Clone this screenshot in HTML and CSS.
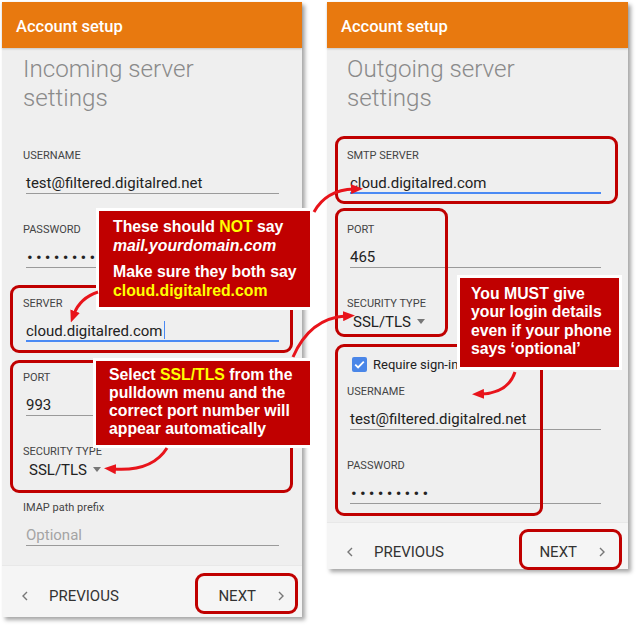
FILE: index.html
```html
<!DOCTYPE html>
<html lang="en">
<head>
<meta charset="utf-8">
<title>Account setup</title>
<link rel="stylesheet" href="styles.css">
</head>
<body>
<div class="page">
  <section class="phone phone-left">
    <header class="appbar">Account setup</header>
    <div class="content">
      <h1 class="title">Incoming server<br>settings</h1>
      <div class="field field-first">
        <div class="label">USERNAME</div>
        <div class="value">test@filtered.digitalred.net</div>
      </div>
      <div class="field">
        <div class="label">PASSWORD</div>
        <div class="value dots">•••••••••</div>
      </div>
      <div class="field">
        <div class="label">SERVER</div>
        <div class="value focused">cloud.digitalred.com<span class="cursor"></span></div>
      </div>
      <div class="field">
        <div class="label">PORT</div>
        <div class="value">993</div>
      </div>
      <div class="field field-spin">
        <div class="label">SECURITY TYPE</div>
        <div class="spinner">SSL/TLS <span class="caret"></span></div>
      </div>
      <div class="field field-after-spin">
        <div class="label">IMAP path prefix</div>
        <div class="value placeholder">Optional</div>
      </div>
    </div>
    <nav class="nav nav-left">
      <div class="prev">
        <svg class="chev" width="6" height="10" viewBox="0 0 6 10"><path d="M5 1 L1 5 L5 9" fill="none" stroke="#777" stroke-width="1.4"/></svg>
        <span>PREVIOUS</span>
      </div>
      <div class="next">
        <span>NEXT</span>
        <svg class="chev" width="6" height="10" viewBox="0 0 6 10"><path d="M1 1 L5 5 L1 9" fill="none" stroke="#777" stroke-width="1.4"/></svg>
      </div>
    </nav>
  </section>

  <section class="phone phone-right">
    <header class="appbar">Account setup</header>
    <div class="content">
      <h1 class="title">Outgoing server<br>settings</h1>
      <div class="field field-first">
        <div class="label">SMTP SERVER</div>
        <div class="value focused">cloud.digitalred.com</div>
      </div>
      <div class="field">
        <div class="label">PORT</div>
        <div class="value">465</div>
      </div>
      <div class="field field-spin">
        <div class="label">SECURITY TYPE</div>
        <div class="spinner">SSL/TLS <span class="caret"></span></div>
      </div>
      <div class="check-row">
        <span class="checkbox"><svg width="15" height="15" viewBox="0 0 15 15"><path d="M3.2 7.6 L6.1 10.5 L11.8 4.6" fill="none" stroke="#fff" stroke-width="1.8"/></svg></span>
        <span>Require sign-in</span>
      </div>
      <div class="field field-after-check">
        <div class="label">USERNAME</div>
        <div class="value">test@filtered.digitalred.net</div>
      </div>
      <div class="field">
        <div class="label">PASSWORD</div>
        <div class="value dots">•••••••••</div>
      </div>
    </div>
    <nav class="nav nav-right">
      <div class="prev">
        <svg class="chev" width="6" height="10" viewBox="0 0 6 10"><path d="M5 1 L1 5 L5 9" fill="none" stroke="#777" stroke-width="1.4"/></svg>
        <span>PREVIOUS</span>
      </div>
      <div class="next">
        <span>NEXT</span>
        <svg class="chev" width="6" height="10" viewBox="0 0 6 10"><path d="M1 1 L5 5 L1 9" fill="none" stroke="#777" stroke-width="1.4"/></svg>
      </div>
    </nav>
  </section>

  <div class="ring ring-l-server"></div>
  <div class="ring ring-l-port"></div>
  <div class="ring ring-l-next"></div>
  <div class="ring ring-r-smtp"></div>
  <div class="ring ring-r-port"></div>
  <div class="ring ring-r-login"></div>
  <div class="ring ring-r-next"></div>

  <div class="callout callout-server">
    <p>These should <span class="hl">NOT</span> say<br><em>mail.yourdomain.com</em></p>
    <p class="para2">Make sure they both say<br><span class="hl">cloud.digitalred.com</span></p>
  </div>
  <div class="callout callout-ssl">
    <p>Select <span class="hl">SSL/TLS</span> from the<br>pulldown menu and the<br>correct port number will<br>appear automatically</p>
  </div>
  <div class="callout callout-login">
    <p>You MUST give<br>your login details<br>even if your phone<br>says ‘optional’</p>
  </div>

  <svg class="arrows" width="639" height="627" viewBox="0 0 639 627">
    <defs>
      <marker id="ah" markerWidth="12" markerHeight="10" refX="3" refY="5" orient="auto" markerUnits="userSpaceOnUse">
        <path d="M0 0 L12 5 L0 10 Z" fill="#e8141b"/>
      </marker>
    </defs>
    <g fill="none" stroke="#e8141b" stroke-width="3" marker-end="url(#ah)">
      <path d="M98 292 Q80 298 74 314"/>
      <path d="M314 212 Q326 190 354 189"/>
      <path d="M293 357 Q310 318 346 316"/>
      <path d="M167 448 Q152 472 113 469"/>
      <path d="M515 372 Q508 393 481 394"/>
    </g>
  </svg>
</div>
</body>
</html>
```
FILE: styles.css
```css
* { box-sizing: border-box; }
body {
  margin: 0;
  background: #ffffff;
  font-family: Roboto, "Liberation Sans", sans-serif;
}
.page {
  position: relative;
  width: 639px;
  height: 627px;
  display: flex;
  align-items: flex-start;
  gap: 25px;
  padding: 2px 0 0 2px;
}
.phone {
  display: flex;
  flex-direction: column;
  background: #efefef;
  box-shadow: 3px 3px 4px rgba(0, 0, 0, 0.35);
}
.phone-left { width: 300px; height: 615px; }
.phone-right { width: 301px; height: 567px; }

.appbar {
  height: 46px;
  padding: 2px 0 0 14px;
  line-height: 46px;
  background: #e8790f;
  color: #ffffff;
  font-size: 16.5px;
  font-weight: 500;
  box-shadow: 0 1px 2px rgba(0, 0, 0, 0.18);
}
.content {
  flex: 1;
  padding: 0 21px 0 21px;
}
.phone-right .content { padding: 0 25px 0 20px; }

.title {
  margin: 7px 0 0;
  font-family: "Roboto Light", Roboto, "Liberation Sans", sans-serif;
  font-size: 24.2px;
  font-weight: 300;
  line-height: 29px;
  color: #8a8a8a;
}
.field { margin-top: 29px; }
.field-first { margin-top: 36px; }
.label {
  font-size: 11px;
  line-height: 14px;
  color: #444444;
  margin-bottom: 10px;
}
.value {
  height: 21px;
  margin: 0 2px 0 3px;
  font-size: 15px;
  line-height: 20px;
  color: #222222;
  border-bottom: 1px solid #9a9a9a;
  white-space: nowrap;
}
.value.focused {
  border-bottom: 2px solid #4a8af4;
}
.value.placeholder { color: #a4a4a4; }
.value.dots {
  font-size: 17px;
  letter-spacing: 3.2px;
  padding-left: 1px;
}
.cursor {
  display: inline-block;
  width: 1px;
  height: 18px;
  margin-left: 1px;
  vertical-align: -3px;
  background: #4a8af4;
}
.field-spin .label { margin-bottom: 1px; }
.spinner {
  margin-left: 6px;
  font-size: 15px;
  line-height: 20px;
  color: #222222;
}
.caret {
  display: inline-block;
  width: 0;
  height: 0;
  margin-left: 2px;
  vertical-align: 3px;
  border-left: 4px solid transparent;
  border-right: 4px solid transparent;
  border-top: 5px solid #777777;
}
.field-after-spin { margin-top: 21px; }

.check-row {
  display: flex;
  align-items: center;
  gap: 6px;
  margin: 23px 0 0 5px;
  height: 18px;
  font-size: 13px;
  color: #222222;
}
.checkbox {
  display: block;
  width: 15px;
  height: 15px;
  border-radius: 2px;
  background: #4a86e8;
}
.checkbox svg { display: block; }
.field-after-check { margin-top: 12px; }

.nav {
  display: flex;
  align-items: flex-start;
  padding: 20px 18px 0 20px;
  background: #f5f5f5;
  border-top: 1px solid #e8e8e8;
  font-size: 15px;
  line-height: 20px;
  color: #333333;
}
.nav-left { height: 52px; }
.nav-right { height: 47px; padding-top: 19px; padding-right: 23px; }
.prev, .next {
  display: flex;
  align-items: center;
}
.prev .chev { margin-right: 21px; }
.next { margin-left: auto; gap: 22px; }
.chev { display: block; }

.ring {
  position: absolute;
  border: 3px solid #c00000;
  border-radius: 9px;
}
.ring-l-server { left: 10px; top: 285px; width: 283px; height: 68px; }
.ring-l-port { left: 10px; top: 360px; width: 283px; height: 133px; }
.ring-l-next { left: 195px; top: 573px; width: 103px; height: 41px; }
.ring-r-smtp { left: 335px; top: 136px; width: 283px; height: 68px; }
.ring-r-port { left: 335px; top: 208px; width: 113px; height: 129px; }
.ring-r-login { left: 335px; top: 344px; width: 208px; height: 172px; }
.ring-r-next { left: 519px; top: 529px; width: 103px; height: 41px; }

.callout {
  position: absolute;
  background: #c00000;
  border: 3px solid #ffffff;
  color: #ffffff;
  font-family: "Liberation Sans", Arial, sans-serif;
  font-weight: bold;
  font-size: 15.8px;
  line-height: 18.5px;
  white-space: nowrap;
}
.callout p { margin: 0; }
.callout .para2 { margin-top: 8px; }
.callout em { font-style: italic; }
.hl { color: #ffff00; }
.callout-server { left: 96px; top: 208px; width: 217px; height: 102px; padding: 7px 0 0 14px; }
.callout-ssl { left: 93px; top: 358px; width: 220px; height: 90px; padding: 5px 0 0 13px; line-height: 18px; }
.callout-login { left: 457px; top: 275px; width: 165px; height: 95px; padding: 7px 0 0 11px; line-height: 18.3px; }

.arrows {
  position: absolute;
  left: 0;
  top: 0;
  pointer-events: none;
}
```
